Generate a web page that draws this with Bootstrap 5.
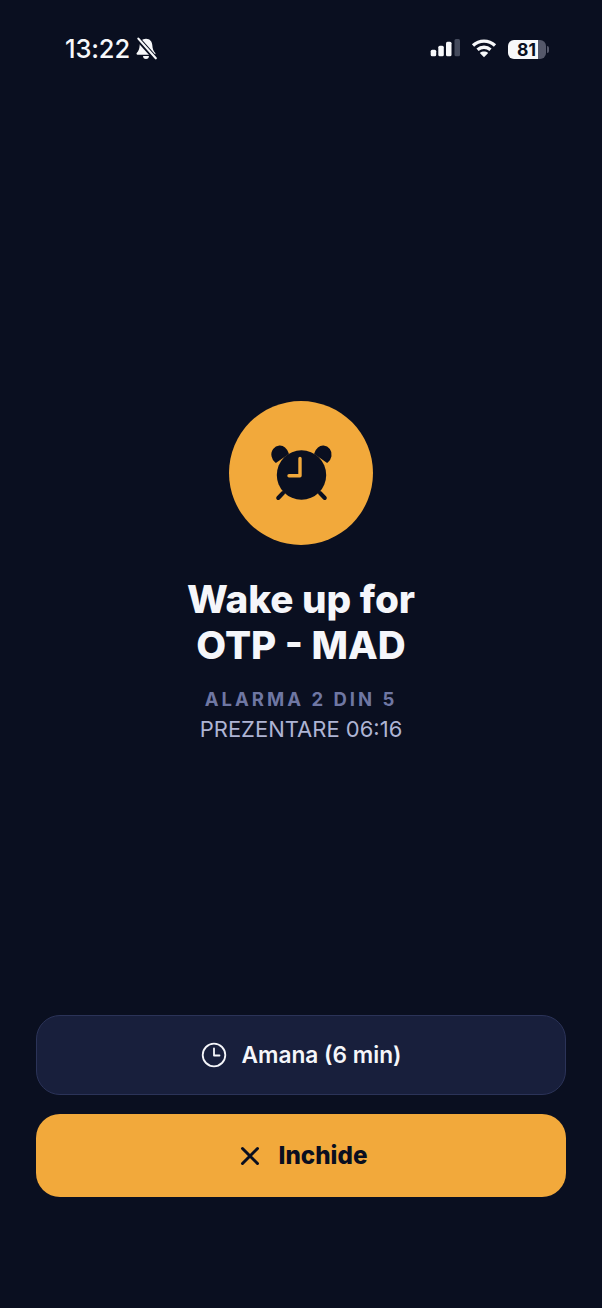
<!DOCTYPE html>
<html lang="ro">
<head>
<meta charset="utf-8">
<title>Alarma</title>
<link href="https://cdn.jsdelivr.net/npm/bootstrap@5.3.0/dist/css/bootstrap.min.css" rel="stylesheet">
<style>
html,body{height:100%;margin:0}
body{background:#0a0f20;font-family:Inter,"Liberation Sans",sans-serif;color:#f5f6fa}
.screen{height:1308px;width:602px;overflow:hidden}
.statusbar{height:401px;padding:36px 53px 0 65px;align-items:flex-start}
.clock-time{font-size:25.500px;font-weight:500;line-height:26px;letter-spacing:-.15px;color:#f7f8fa}
.hero-circle{width:144px;height:144px;border-radius:50%;background:#f2a93b}
.wake-title{font-size:38.700px;line-height:46px;font-weight:800;margin:31px 0 0;color:#f5f6fa}
.alarm-count{font-size:18.500px;line-height:22px;font-weight:700;letter-spacing:3px;color:#6f77a3;margin-top:20px}
.alarm-info{font-size:22px;line-height:28px;font-weight:400;color:#aeb4d4;margin-top:5px}
.actions{padding:0 36px;margin-top:auto;margin-bottom:111px;gap:19px}
.act-btn{height:80px;border-radius:24px;font-size:22.700px;font-weight:600;gap:15px}
.act-snooze{background:#181f3c;border:1.500px solid #2b3358;color:#f5f6fa}
.act-snooze:hover{background:#181f3c;color:#f5f6fa;border-color:#2b3358}
.act-close{height:83px;background:#f2a93b;border:0;color:#0a0f20;font-weight:800;font-size:24.200px;gap:18px;padding-left:16px}
.act-close:hover{background:#f2a93b;color:#0a0f20}
.act-close span{margin-top:2px}
.batt{width:38px;height:19px;border-radius:6px;background:linear-gradient(90deg,#f7f8fa 0 78%,#55586a 78%);color:#0a0f20;font-size:17.500px;font-weight:700;line-height:19px;letter-spacing:.1px;padding-left:9px}
.batt-nub{width:2px;height:7px;background:#55586a;border-radius:0 2px 2px 0}
.status-right{height:26px;gap:11px}
</style>
</head>
<body>
<div class="screen d-flex flex-column">
  <div class="statusbar d-flex justify-content-between">
    <div class="d-flex align-items-center" style="gap:4px">
      <span class="clock-time">13:22</span>
      <svg width="24" height="24" viewBox="0 0 22 22"><path fill="#f7f8fa" d="M11 1.500c-3.600 0-5.600 2.600-5.800 6-.2 3.400-1 5.400-2.700 7.200-.5.600-.1 1.500.7 1.500h15.600c.8 0 1.200-.9.700-1.500-1.700-1.800-2.500-3.800-2.700-7.200-.2-3.400-2.200-6-5.800-6z"/><path fill="#f7f8fa" d="M8.300 17.500h5.400a2.700 2.700 0 0 1-5.400 0z"/><path stroke="#0a0f20" stroke-width="4.500" d="M3 1l17 19"/><path stroke="#f7f8fa" stroke-width="2" stroke-linecap="round" d="M4 1.500l16 18"/></svg>
    </div>
    <div class="status-right d-flex align-items-center">
      <svg width="30" height="20" viewBox="0 0 30 20"><rect x=".7" y="10.700" width="5.500" height="6.600" rx="1.500" fill="#f7f8fa"/><rect x="8.300" y="6.700" width="5.500" height="10.600" rx="1.500" fill="#f7f8fa"/><rect x="16" y="2.700" width="5.500" height="14.600" rx="1.500" fill="#f7f8fa"/><rect x="24.500" y="0" width="5.500" height="17.300" rx="1.500" fill="#444a5c"/></svg>
      <svg width="26" height="20" viewBox="0 0 26 20" fill="none" stroke="#f7f8fa" stroke-width="3.300"><path d="M2 6.500c6.300-5.800 15.700-5.800 22 0"/><path d="M6.500 10.700c3.800-3.300 9.200-3.300 13 0"/><path fill="#f7f8fa" stroke="none" d="M13 18.300l-4.200-4.400c2.500-1.900 5.900-1.900 8.400 0z"/></svg>
      <div class="d-flex align-items-center" style="gap:1px">
        <div class="batt">81</div><div class="batt-nub"></div>
      </div>
    </div>
  </div>

  <main class="d-flex flex-column align-items-center text-center">
    <div class="hero-circle d-flex align-items-center justify-content-center">
      <svg width="64" height="64" viewBox="0 0 64 64" fill="#0a0f20">
        <circle cx="32.500" cy="34" r="24.700"/>
        <path stroke="#0a0f20" stroke-width="2" stroke-linejoin="round" d="M18.800 12.500C17 8 13.500 5.300 10.500 5.500 6 5.800 2.500 10 3.500 15c.5 2.500 2 4.800 3.500 5.800z"/>
        <path stroke="#0a0f20" stroke-width="2" stroke-linejoin="round" d="M46.200 12.500C48 8 51.500 5.300 54.500 5.500 59 5.800 62.500 10 61.500 15c-.5 2.500-2 4.800-3.500 5.800z"/>
        <path d="M14 52l-4.800 5M51 52l4.800 5" stroke="#0a0f20" stroke-width="4" stroke-linecap="round"/>
        <path d="M31 17.500v17.200H20" fill="none" stroke="#f2a93b" stroke-width="3.400" stroke-linecap="round" stroke-linejoin="round"/>
      </svg>
    </div>
    <h1 class="wake-title">Wake up for<br>OTP - MAD</h1>
    <div class="alarm-count">ALARMA 2 DIN 5</div>
    <div class="alarm-info">PREZENTARE 06:16</div>
  </main>

  <div class="actions d-flex flex-column">
    <button type="button" class="btn act-btn act-snooze d-flex align-items-center justify-content-center">
      <svg width="26" height="26" viewBox="0 0 26 26" fill="none" stroke="#f5f6fa" stroke-width="1.800" stroke-linecap="round" stroke-linejoin="round"><circle cx="13" cy="13" r="11.300"/><path d="M13 6.500V13.500H18.500"/></svg>
      <span>Amana (6 min)</span>
    </button>
    <button type="button" class="btn act-btn act-close d-flex align-items-center justify-content-center">
      <svg width="22" height="22" viewBox="0 0 22 22" fill="none" stroke="#0a0f20" stroke-width="3" stroke-linecap="round"><path d="M3.500 3.500l15 15M18.500 3.500l-15 15"/></svg>
      <span>Inchide</span>
    </button>
  </div>
</div>
<script src="https://cdn.jsdelivr.net/npm/bootstrap@5.3.0/dist/js/bootstrap.bundle.min.js"></script>
</body>
</html>
